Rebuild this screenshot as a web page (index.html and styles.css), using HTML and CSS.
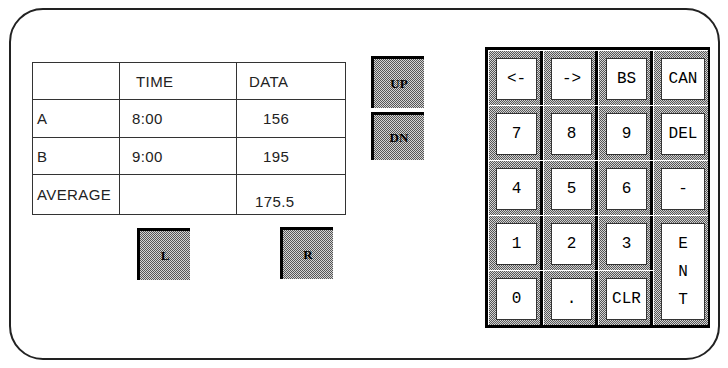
FILE: index.html
```html
<!DOCTYPE html>
<html lang="en">
<head>
    <meta charset="UTF-8">
    <title>Data Panel</title>
    <link rel="stylesheet" href="styles.css">
</head>
<body>
    <div class="frame">
        <div class="left">
            <table class="data">
                <tr class="r1"><td class="c1"></td><td class="c2">TIME</td><td class="c3">DATA</td></tr>
                <tr class="r2"><td>A</td><td>8:00</td><td class="num">156</td></tr>
                <tr class="r3"><td>B</td><td>9:00</td><td class="num">195</td></tr>
                <tr class="r4"><td>AVERAGE</td><td></td><td class="num low">175.5</td></tr>
            </table>
            <div class="lr">
                <div class="btn">L</div>
                <div class="btn">R</div>
            </div>
        </div>

        <div class="updn">
            <div class="btn up">UP</div>
            <div class="btn dn">DN</div>
        </div>

        <div class="keypad">
            <div class="key"><span class="face">&lt;-</span></div>
            <div class="key"><span class="face">-&gt;</span></div>
            <div class="key"><span class="face">BS</span></div>
            <div class="key"><span class="face">CAN</span></div>
            <div class="key"><span class="face">7</span></div>
            <div class="key"><span class="face">8</span></div>
            <div class="key"><span class="face">9</span></div>
            <div class="key"><span class="face">DEL</span></div>
            <div class="key"><span class="face">4</span></div>
            <div class="key"><span class="face">5</span></div>
            <div class="key"><span class="face">6</span></div>
            <div class="key"><span class="face">-</span></div>
            <div class="key"><span class="face">1</span></div>
            <div class="key"><span class="face">2</span></div>
            <div class="key"><span class="face">3</span></div>
            <div class="key ent"><span class="face">E<br>N<br>T</span></div>
            <div class="key"><span class="face">0</span></div>
            <div class="key"><span class="face">.</span></div>
            <div class="key"><span class="face">CLR</span></div>
        </div>
    </div>
</body>
</html>
```

FILE: styles.css
```css
body {
    margin: 0;
    background: #fff;
    font-family: "Liberation Sans", Arial, sans-serif;
    color: #222;
}
.frame {
    margin: 8px 0 0 9px;
    width: 711px;
    height: 352px;
    border: 2px solid #222;
    border-radius: 34px;
    display: flex;
    align-items: flex-start;
    box-sizing: border-box;
}
.left {
    margin: 52px 0 0 21px;
}
.data {
    border-collapse: collapse;
    font-size: 15px;
    letter-spacing: 0.4px;
}
.data td {
    border: 1px solid #333;
    padding: 0 0 0 4px;
    box-sizing: border-box;
}
.data .r1 td { height: 37px; }
.data .r2 td { height: 38px; }
.data .r3 td { height: 37px; }
.data .r4 td { height: 40px; }
.data .c1 { width: 87px; }
.data .c2 { width: 117px; }
.data .c3 { width: 109px; }
.data td:nth-child(2) { padding-left: 12px; }
.data .r1 td:nth-child(2) { padding-left: 16px; }
.data .r1 td:nth-child(3) { padding-left: 12px; }
.data .num { padding-left: 26px; }
.data .low { padding: 14px 0 0 18px; }

.btn {
    width: 53px;
    height: 52px;
    box-sizing: border-box;
    border-top: 3px solid #000;
    border-left: 3px solid #000;
    background-color: #999;
    background-image: repeating-conic-gradient(#555 0 25%, #d4d4d4 0 50%);
    background-size: 2px 2px;
    display: flex;
    align-items: center;
    justify-content: center;
    font-family: "Liberation Serif", serif;
    font-weight: bold;
    font-size: 13px;
    color: #000;
}
.lr {
    display: flex;
    gap: 90px;
    margin: 13px 0 0 105px;
}
.lr .btn + .btn {
    margin-top: -1px;
}
.updn {
    margin: 46px 0 0 25px;
    display: flex;
    flex-direction: column;
    gap: 4px;
}
.updn .dn {
    height: 48px;
}

.keypad {
    margin: 37px 0 0 61px;
    display: grid;
    grid-template-columns: repeat(4, 54px);
    grid-template-rows: repeat(5, 54px);
    gap: 1px;
    padding: 1px 0 0 1px;
    background: #fff;
    border: 3px solid #000;
    border-right-width: 2px;
}
.key {
    padding: 7px 3px 5px 7px;
    border-right: 3px solid #000;
    background-color: #999;
    background-image: repeating-conic-gradient(#555 0 25%, #d4d4d4 0 50%);
    background-size: 2px 2px;
    display: flex;
}
.key:nth-child(4n) {
    border-right: 0;
}
.face {
    flex: 1;
    background: #fff;
    border: 1px solid #333;
    display: flex;
    align-items: center;
    justify-content: center;
    font-family: "Liberation Mono", "Courier New", monospace;
    font-size: 16px;
    color: #000;
    text-align: center;
}
.ent {
    grid-column: 4;
    grid-row: 4 / span 2;
    border-right: 0;
}
.ent .face {
    line-height: 28px;
}
```
